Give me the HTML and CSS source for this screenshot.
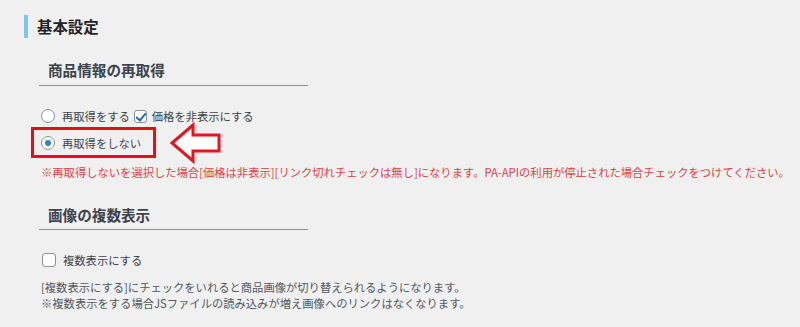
FILE: index.html
```html
<!DOCTYPE html>
<html lang="ja">
<head>
<meta charset="utf-8">
<title>基本設定</title>
<link rel="stylesheet" href="styles.css">
</head>
<body>
<div class="page">
  <h2 class="title">基本設定</h2>

  <section class="group">
    <h3 class="group-title">商品情報の再取得</h3>
    <div class="options">
      <div class="row">
        <label class="opt"><input type="radio" name="refetch"><span>再取得をする</span></label>
        <label class="opt opt-check"><input type="checkbox" checked><span>価格を非表示にする</span></label>
      </div>
      <div class="row row-marked">
        <label class="opt"><input type="radio" name="refetch" checked><span>再取得をしない</span></label>
        <span class="mark-box"></span>
        <svg class="mark-arrow" width="60" height="50" viewBox="0 0 60 50">
          <polygon points="7,25 28,7 28,17 54,17 54,33 28,33 28,43" fill="#ffffff" stroke="#e8141c" stroke-width="3" stroke-linejoin="miter"/>
        </svg>
      </div>
      <p class="notice">※再取得しないを選択した場合[価格は非表示][リンク切れチェックは無し]になります。PA-APIの利用が停止された場合チェックをつけてください。</p>
    </div>
  </section>

  <section class="group group-2">
    <h3 class="group-title">画像の複数表示</h3>
    <div class="options options-2">
      <div class="row">
        <label class="opt"><input type="checkbox"><span>複数表示にする</span></label>
      </div>
      <p class="desc">[複数表示にする]にチェックをいれると商品画像が切り替えられるようになります。<br>※複数表示をする場合JSファイルの読み込みが増え画像へのリンクはなくなります。</p>
    </div>
  </section>
</div>
</body>
</html>
```

FILE: styles.css
```css
* { box-sizing: border-box; }

html, body {
  margin: 0;
  padding: 0;
  background: #f0f0f1;
}

body {
  font-family: "Noto Sans CJK JP", "Noto Sans", "Liberation Sans", sans-serif;
  color: #3c434a;
  font-size: 11.3px;
}

.page {
  padding: 15px 0 0 24px;
  height: 327px;
  overflow: hidden;
}

.title {
  margin: 0;
  height: 23px;
  line-height: 23px;
  font-size: 15.4px;
  font-weight: 700;
  color: #1d2327;
  border-left: 4px solid #7cc5f3;
  padding-left: 9px;
}

.group {
  margin-left: 15px;
}

.group-title {
  margin: 22px 0 0;
  width: 269px;
  padding: 0 0 5px 9px;
  line-height: 20px;
  font-size: 14.6px;
  font-weight: 700;
  color: #3c434a;
  border-bottom: 1px solid #8c8f94;
}

.group-2 .group-title {
  margin-top: 24px;
  padding-bottom: 4px;
}

.options {
  padding-left: 2px;
  margin-top: 19px;
}

.row {
  display: flex;
  align-items: center;
  height: 22px;
}

.row + .row {
  margin-top: 5px;
}

.row-marked {
  position: relative;
}

.opt {
  display: flex;
  align-items: center;
  line-height: 22px;
  color: #3c434a;
}

.opt-check {
  margin-left: 4px;
}

.opt input {
  -webkit-appearance: none;
  appearance: none;
  margin: 0 7px 0 0;
  width: 14px;
  height: 14px;
  border: 1px solid #8c8f94;
  background: #fff;
  position: relative;
  flex: none;
}

.opt-check input {
  width: 13px;
  height: 13px;
  margin-right: 5px;
}

.options-2 .opt input {
  margin-left: 1px;
}

.opt input[type="radio"] {
  border-radius: 50%;
}

.opt input[type="checkbox"] {
  border-radius: 3px;
}

.opt input[type="radio"]:checked::before {
  content: "";
  position: absolute;
  left: 3px;
  top: 3px;
  width: 6px;
  height: 6px;
  border-radius: 50%;
  background: #3582c4;
}

.opt input[type="checkbox"]:checked::before {
  content: "";
  position: absolute;
  left: 3.5px;
  top: 0.5px;
  width: 4px;
  height: 8px;
  border-right: 2px solid #2271b1;
  border-bottom: 2px solid #2271b1;
  transform: rotate(40deg);
}

.mark-box {
  position: absolute;
  left: -10px;
  top: -5px;
  width: 125px;
  height: 31px;
  border: 3px solid #e50f1b;
}

.mark-arrow {
  position: absolute;
  left: 124px;
  top: -14px;
}

.notice {
  margin: 9px 0 0;
  line-height: 18px;
  color: #df4143;
  white-space: nowrap;
}

.options-2 {
  margin-top: 19px;
}

.desc {
  margin: 8px 0 0;
  line-height: 16px;
  color: #50575e;
}
```
